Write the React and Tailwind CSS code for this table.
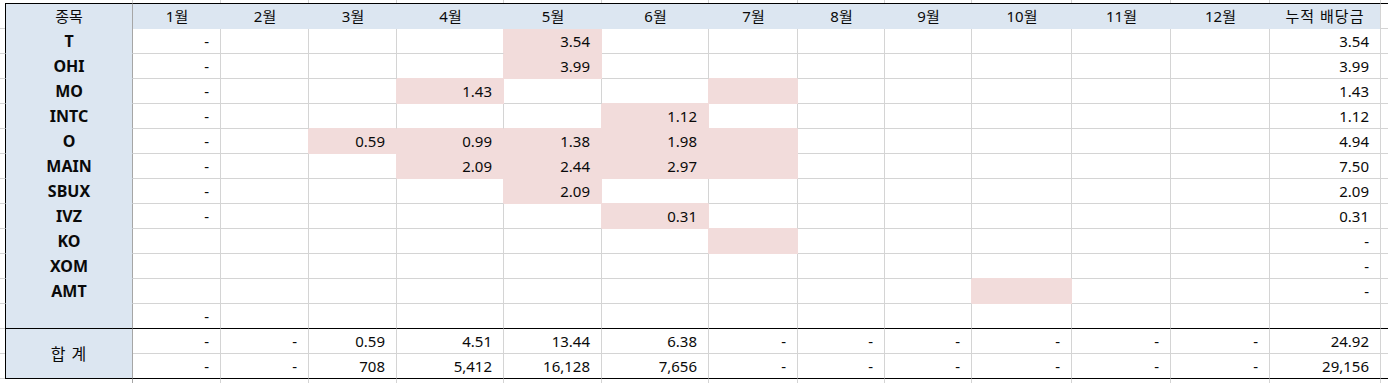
import React from 'react';

const months = ['1월', '2월', '3월', '4월', '5월', '6월', '7월', '8월', '9월', '10월', '11월', '12월'];

// 종목별 월 배당 (index 0 = 1월)
const rows = [
    { name: 'T', vals: { 0: '-', 4: '3.54' }, pink: [4], total: '3.54' },
    { name: 'OHI', vals: { 0: '-', 4: '3.99' }, pink: [4], total: '3.99' },
    { name: 'MO', vals: { 0: '-', 3: '1.43' }, pink: [3, 6], total: '1.43' },
    { name: 'INTC', vals: { 0: '-', 5: '1.12' }, pink: [5], total: '1.12' },
    { name: 'O', vals: { 0: '-', 2: '0.59', 3: '0.99', 4: '1.38', 5: '1.98' }, pink: [2, 3, 4, 5, 6], total: '4.94' },
    { name: 'MAIN', vals: { 0: '-', 3: '2.09', 4: '2.44', 5: '2.97' }, pink: [3, 4, 5, 6], total: '7.50' },
    { name: 'SBUX', vals: { 0: '-', 4: '2.09' }, pink: [4], total: '2.09' },
    { name: 'IVZ', vals: { 0: '-', 5: '0.31' }, pink: [5], total: '0.31' },
    { name: 'KO', vals: {}, pink: [6], total: '-' },
    { name: 'XOM', vals: {}, pink: [], total: '-' },
    { name: 'AMT', vals: {}, pink: [9], total: '-' },
    { name: '', vals: { 0: '-' }, pink: [], total: '' },
];

const sum1 = ['-', '-', '0.59', '4.51', '13.44', '6.38', '-', '-', '-', '-', '-', '-', '24.92'];
const sum2 = ['-', '-', '708', '5,412', '16,128', '7,656', '-', '-', '-', '-', '-', '-', '29,156'];

const isPink = (r, c) => r >= 0 && r < rows.length && c >= 0 && c < 12 && rows[r].pink.includes(c);

const GRID = 'grid grid-cols-[5px_128px_88px_88px_88px_107px_98px_107px_89px_87px_87px_100px_99px_99px_111px_7px]';

const monthCell = (r, c) => {
    const pink = isPink(r, c);
    const last = r === rows.length - 1;
    const rightPink = pink || isPink(r, c + 1);
    const bottomPink = pink || isPink(r + 1, c);
    return [
        'h-[25px] border-r border-b flex items-center justify-end pr-[11px]',
        pink ? 'bg-[#f2dcdb]' : 'bg-white',
        rightPink ? 'border-r-[#f2dcdb]' : 'border-r-[#d4d4d4]',
        last ? 'border-b-black' : bottomPink ? 'border-b-[#f2dcdb]' : 'border-b-[#d4d4d4]',
    ].join(' ');
};

const App = () => {
    return (
        <div className="w-[1388px] h-[383px] overflow-hidden bg-white text-[15px] leading-none text-[#0a0a0a] font-['Noto_Sans','Noto_Sans_CJK_KR',sans-serif]">
            {/* 위쪽 여백 줄 */}
            <div className={GRID}>
                <div className="h-[3px]" />
                {Array.from({ length: 14 }).map((_, i) => (
                    <div key={i} className="h-[3px] border-r border-[#d4d4d4]" />
                ))}
                <div className="h-[3px]" />
            </div>

            <div className={GRID}>
                {/* 머리글 */}
                <div className="h-[26px] border-b border-[#d4d4d4]" />
                <div className="h-[26px] border-t border-l border-r border-t-black border-l-black border-r-[#a6a6a6] bg-[#dce6f1] flex items-center justify-center">
                    종목
                </div>
                {months.map(m => (
                    <div key={m} className="h-[26px] border-t border-black bg-[#dce6f1] flex items-center justify-center">
                        {m}
                    </div>
                ))}
                <div className="h-[26px] border-t border-r border-t-black border-r-[#d4d4d4] bg-[#dce6f1] flex items-center justify-center tracking-[1px]">
                    누적 배당금
                </div>
                <div className="h-[26px] border-t border-b border-t-black border-b-[#d4d4d4]" />

                {/* 종목 행 */}
                {rows.map((row, r) => {
                    const last = r === rows.length - 1;
                    return (
                        <React.Fragment key={r}>
                            <div className="h-[25px] border-b border-[#d4d4d4]" />
                            <div className={`h-[25px] border-l border-r border-b border-l-black border-r-[#a6a6a6] bg-[#dce6f1] flex items-center justify-center font-bold text-[16px] ${last ? 'border-b-black' : 'border-b-[#dce6f1]'}`}>
                                {row.name}
                            </div>
                            {months.map((m, c) => (
                                <div key={m} className={monthCell(r, c)}>
                                    {row.vals[c] || ''}
                                </div>
                            ))}
                            <div className={`h-[25px] border-r border-b border-r-[#d4d4d4] flex items-center justify-end pr-[11px] ${last ? 'border-b-black' : 'border-b-[#d4d4d4]'}`}>
                                {row.total}
                            </div>
                            <div className={`h-[25px] border-b ${last ? 'border-black' : 'border-[#d4d4d4]'}`} />
                        </React.Fragment>
                    );
                })}

                {/* 합계 */}
                <div className="h-[25px] border-b border-[#d4d4d4]" />
                <div className="row-span-2 border-l border-r border-b border-l-black border-r-[#a6a6a6] border-b-black bg-[#dce6f1] flex items-center justify-center text-[16px] tracking-[1px]">
                    합 계
                </div>
                {sum1.map((v, i) => (
                    <div key={i} className="h-[25px] border-r border-b border-r-[#d4d4d4] border-b-[#d4d4d4] flex items-center justify-end pr-[11px]">
                        {v}
                    </div>
                ))}
                <div className="h-[25px] border-b border-[#d4d4d4]" />

                <div className="h-[25px] border-b border-[#d4d4d4]" />
                {sum2.map((v, i) => (
                    <div key={i} className="h-[25px] border-r border-b border-r-[#d4d4d4] border-b-black flex items-center justify-end pr-[11px]">
                        {v}
                    </div>
                ))}
                <div className="h-[25px] border-b border-black" />
            </div>

            {/* 아래쪽 여백 줄 */}
            <div className={GRID}>
                <div className="h-[4px]" />
                {Array.from({ length: 14 }).map((_, i) => (
                    <div key={i} className={`h-[4px] border-r ${i === 0 ? 'border-[#a6a6a6]' : 'border-[#d4d4d4]'}`} />
                ))}
                <div className="h-[4px]" />
            </div>
        </div>
    );
};

export default App;
